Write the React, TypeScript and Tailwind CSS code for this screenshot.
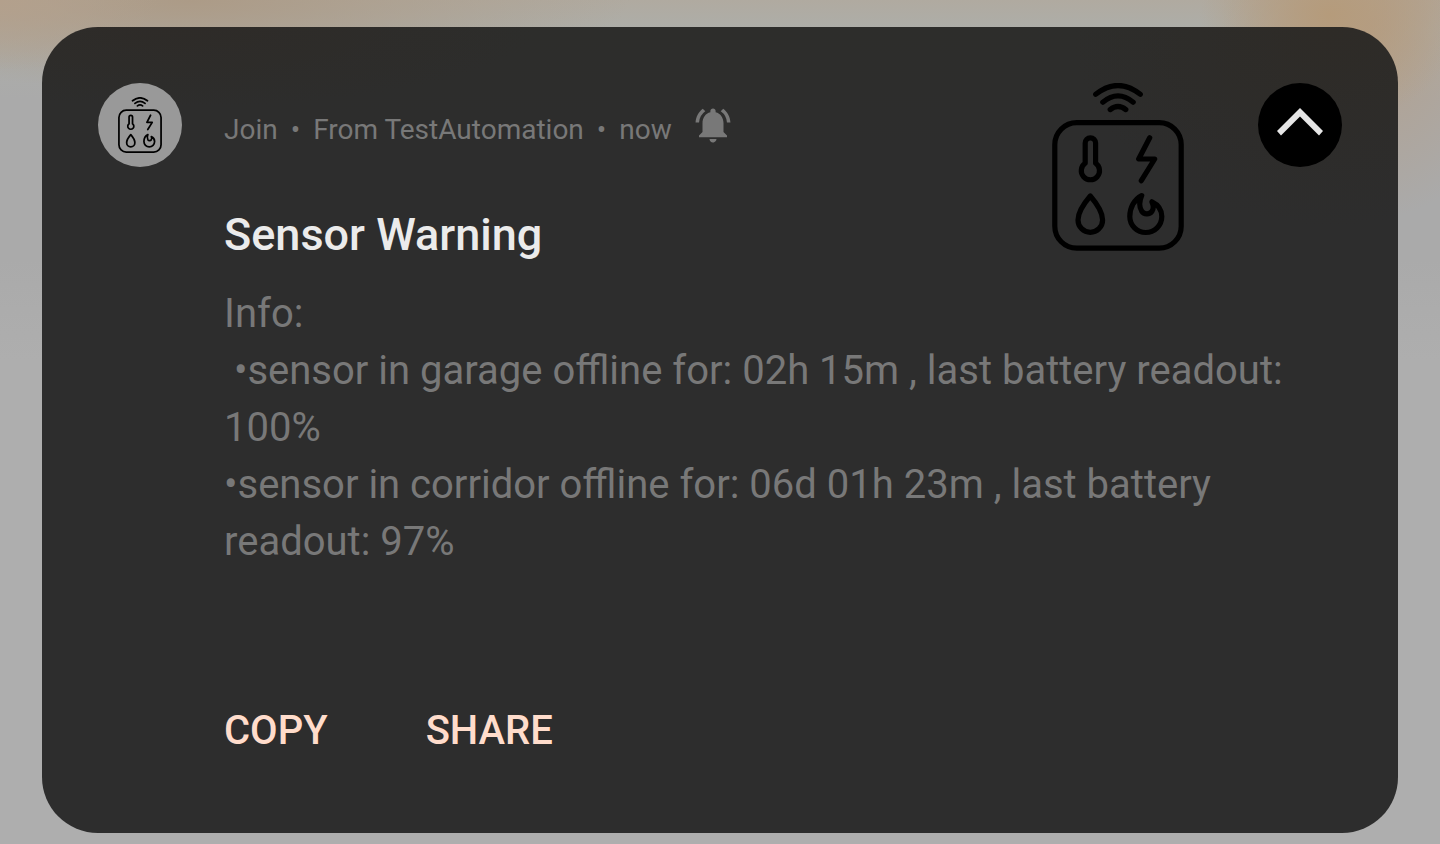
import { useState } from "react";
import { MdNotificationsActive } from "react-icons/md";

const SensorIcon = ({ className }: { className: string }) => (
  <svg
    viewBox="0 0 132 168"
    fill="none"
    stroke="black"
    strokeWidth="5.2"
    strokeLinecap="round"
    strokeLinejoin="round"
    aria-hidden="true"
    className={className}
  >
    {/* signal */}
    <path d="M43.7 11.3Q66 -6.3 88.3 11.3" />
    <path d="M50.8 19.2Q66 6.6 81.2 19.2" />
    <path d="M58.2 26.6Q66 20.4 73.8 26.6" />
    <rect x="2.8" y="39.6" width="126.4" height="125.6" rx="22" />
    {/* thermometer */}
    <path d="M33.2 80.2V60a5.2 5.2 0 0 1 10.4 0v20.2a9.1 9.1 0 1 1 -10.4 0z" />
    {/* bolt */}
    <path d="M97.7 54.7L86.7 76H102.7L89.3 97.7" />
    {/* drop */}
    <path d="M38.3 113C34 118 26 129 26 137a12.3 12.3 0 0 0 24.6 0C50.6 129 42.6 118 38.3 113z" />
    {/* flame */}
    <path d="M89.7 112.6C82 116.5 77.8 125 77.8 133.5a16 16 0 0 0 32 0C109.8 127 105.8 121.6 99.9 118.8C101.6 122.4 101.8 125.6 100 128.2C97.6 131.8 92 131.6 89.6 128C87 123.8 87.6 117.6 89.7 112.6z" />
  </svg>
);

const message = [
  "Info:",
  " •sensor in garage offline for: 02h 15m , last battery readout: 100%",
  "•sensor in corridor offline for: 06d 01h 23m , last battery readout: 97%",
].join("\n");

const App = () => {
  const [expanded, setExpanded] = useState(true);

  return (
    <div className="min-h-screen bg-[#aeaeae] bg-[radial-gradient(ellipse_130px_110px_at_1330px_15px,#b59b7b,transparent),radial-gradient(ellipse_150px_190px_at_1370px_30px,#b3a08c,transparent),radial-gradient(ellipse_160px_70px_at_0px_0px,#b3a08c,transparent),radial-gradient(ellipse_440px_90px_at_190px_0px,#ac9b87,transparent),linear-gradient(#b0aaa0,#adaea9_30px,#aaaaaa_100px,#aaaaaa_260px,#aeaeae_360px)] px-[42px] pt-[27px] pb-[11px] font-[Roboto,sans-serif]">
      <article className="flex items-start gap-[42px] rounded-[56px] bg-[#2d2d2d] bg-[radial-gradient(ellipse_260px_200px_at_95%_0%,#2e2b27,transparent),radial-gradient(ellipse_360px_80px_at_10%_0%,#2e2b28,transparent),linear-gradient(#2d2d2b,transparent_120px)] px-14 pt-14 pb-[74px]">
        <div className="flex size-[84px] shrink-0 items-center justify-center rounded-full bg-[#999999]">
          <SensorIcon className="h-14 w-11" />
        </div>

        <div className="min-w-0 flex-1">
          <header className="flex items-start">
            <div className="flex-1">
              <div className="flex h-[84px] items-center">
                <div className="flex items-end gap-5 text-[28px] leading-8 text-[#787878]">
                  <p className="flex gap-[13px]">
                    <span>Join</span>
                    <span>•</span>
                    <span>From TestAutomation</span>
                    <span>•</span>
                    <span>now</span>
                  </p>
                  <MdNotificationsActive className="size-[42px]" />
                </div>
              </div>
              <h1 className="mt-10 text-[45px] leading-14 font-medium text-[#ebebeb]">Sensor Warning</h1>
            </div>
            <SensorIcon className="mr-[74px] h-[168px] w-[132px]" />
            <button
              type="button"
              aria-label="Collapse"
              aria-expanded={expanded}
              onClick={() => setExpanded(!expanded)}
              className="flex size-[84px] items-center justify-center rounded-full bg-black pb-1.5"
            >
              <svg viewBox="0 0 46 28" className="h-7 w-[46px]" fill="#e6e6e6" aria-hidden="true">
                <path d="M23 0L0 23L4 27.5L23 8.5L42 27.5L46 23z" />
              </svg>
            </button>
          </header>

          {expanded && (
            <p className="mt-[22px] text-[40px] leading-[57px] whitespace-pre-wrap text-[#787878]">{message}</p>
          )}

          <div className="mt-[133px] flex gap-[98px] text-[40px] leading-14 font-medium text-[#ffdccb]">
            <button type="button">COPY</button>
            <button type="button">SHARE</button>
          </div>
        </div>
      </article>
    </div>
  );
};

export default App;
